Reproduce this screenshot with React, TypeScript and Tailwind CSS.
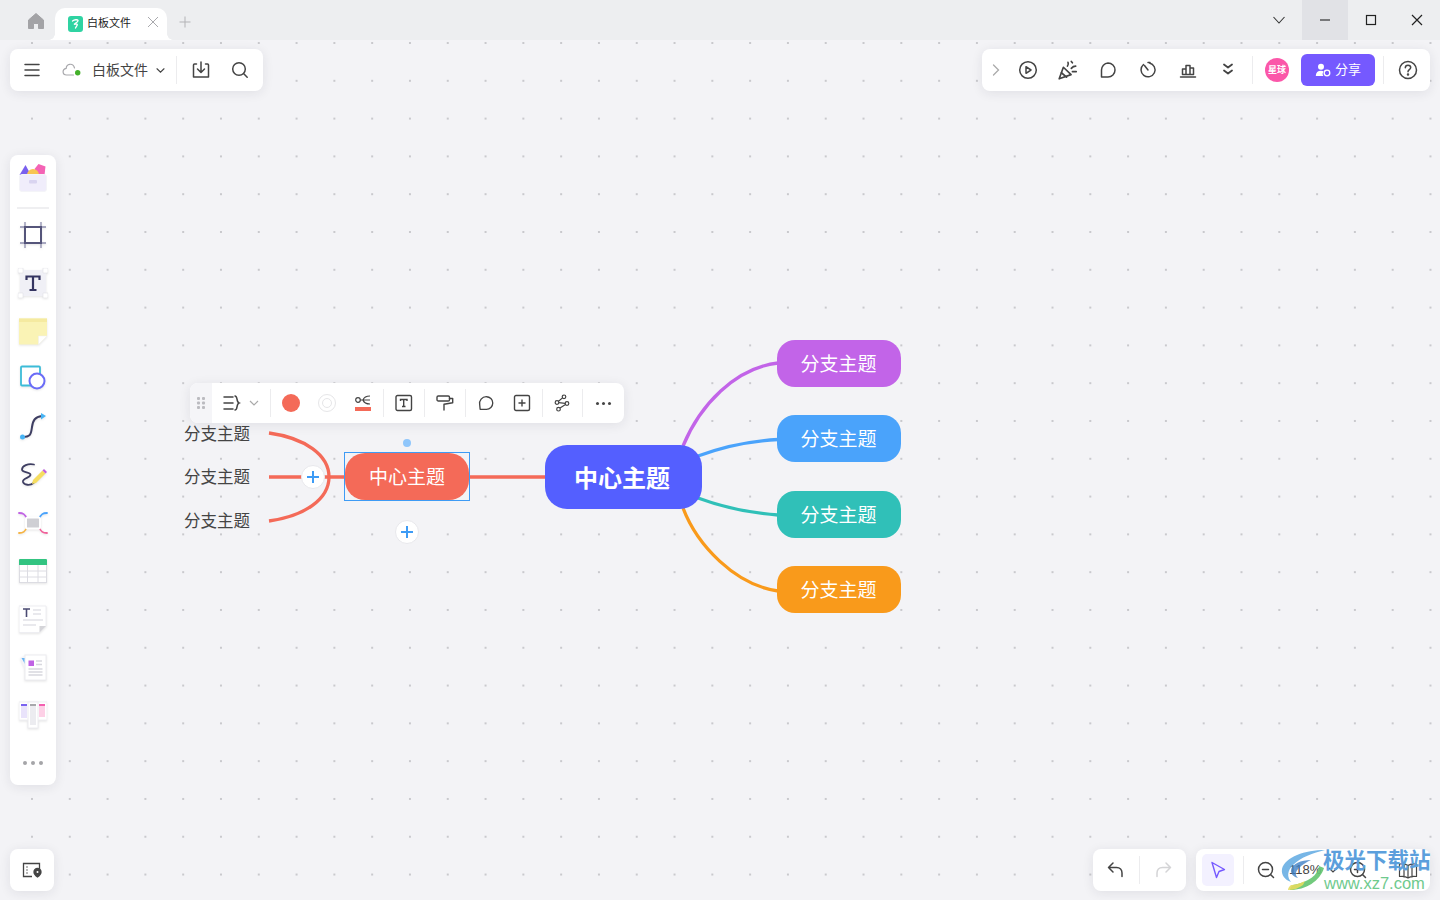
import { ReactNode } from "react";

const FONT = "font-['Noto_Sans_CJK_SC','Noto_Sans',sans-serif]";

const Line = ({ size = 20, children, color = "#444" }: { size?: number; children: ReactNode; color?: string }) => (
  <svg width={size} height={size} viewBox="0 0 20 20" fill="none" stroke={color} strokeWidth="1.5" strokeLinecap="round" strokeLinejoin="round">
    {children}
  </svg>
);

const Sep = ({ h = "h-[28px]", className = "" }: { h?: string; className?: string }) => (
  <div className={`w-px shrink-0 bg-[#ececee] ${h} ${className}`} />
);

const panel = "rounded-[8px] bg-white shadow-[0_2px_12px_rgba(30,30,60,0.09)]";

const TitleBar = () => (
  <div className="flex h-[40px] w-full items-end bg-[#edeef0]">
    <div className="ml-[17px] flex h-[42px] w-[37px] items-center justify-center self-start">
      <svg width="18" height="18" viewBox="0 0 18 18" fill="#a3a3a6">
        <path d="M9 1.500 1.500 8v8.500h5v-5h5v5h5V8z" strokeLinejoin="round" stroke="#a3a3a6" />
      </svg>
    </div>
    <div className="relative ml-[1px] flex h-[32px] w-[112px] items-center rounded-t-[10px] bg-white pl-[13px]">
      <div className="absolute bottom-0 left-[-6px] h-[6px] w-[6px] bg-[radial-gradient(circle_at_0_0,transparent_5.5px,white_6px)]" />
      <div className="absolute bottom-0 right-[-6px] h-[6px] w-[6px] bg-[radial-gradient(circle_at_100%_0,transparent_5.5px,white_6px)]" />
      <svg width="15" height="16" viewBox="0 0 15 16">
        <rect width="15" height="16" rx="3" fill="#2fd3a2" />
        <path d="M4.500 5c2-1.500 5-1.600 5.500-.6.4 1-2.600 2.800-4 4.100 1.500-.6 3.500-.6 3.300.4-.2 1-1.300 2.100-1.800 3.200" fill="none" stroke="#fff" strokeWidth="1.300" strokeLinecap="round" />
      </svg>
      <span className={`mb-[3px] ml-[4px] text-[11px] text-[#222] ${FONT}`}>白板文件</span>
      <svg className="absolute left-[92px] top-[8px]" width="12" height="12" viewBox="0 0 12 12" stroke="#a9a9ad" strokeWidth="1">
        <path d="m1 1 10 10M11 1 1 11" />
      </svg>
    </div>
    <div className="ml-[11px] flex h-[44px] w-[14px] items-center justify-center self-start">
      <svg width="12" height="12" viewBox="0 0 12 12" stroke="#b3b3b6" strokeWidth="1">
        <path d="M6 .5v11M.5 6h11" />
      </svg>
    </div>
    <div className="ml-auto flex h-[40px]">
      <div className="flex w-[46px] items-center justify-center">
        <svg width="14" height="14" viewBox="0 0 14 14" fill="none" stroke="#333" strokeWidth="1.100"><path d="m1.500 4 5.500 6 5.500-6" /></svg>
      </div>
      <div className="flex w-[46px] items-center justify-center bg-[#e1e2e6]">
        <svg width="12" height="12" viewBox="0 0 12 12" stroke="#222" strokeWidth="1.100"><path d="M1 6h10" /></svg>
      </div>
      <div className="flex w-[46px] items-center justify-center">
        <svg width="12" height="12" viewBox="0 0 12 12" fill="none" stroke="#222" strokeWidth="1.200"><rect x="1.500" y="1.500" width="9" height="9" /></svg>
      </div>
      <div className="flex w-[46px] items-center justify-center">
        <svg width="12" height="12" viewBox="0 0 12 12" stroke="#222" strokeWidth="1.200"><path d="m1 1 10 10M11 1 1 11" /></svg>
      </div>
    </div>
  </div>
);

const FilePanel = () => (
  <div className={`absolute left-[10px] top-[9px] flex h-[42px] w-[253px] items-center ${panel}`}>
    <div className="flex w-[44px] justify-center">
      <svg width="16" height="14" viewBox="0 0 16 14" stroke="#444" strokeWidth="1.500" strokeLinecap="round"><path d="M1 1.500h14M1 7h14M1 12.500h14" /></svg>
    </div>
    <div className="ml-[4px] flex w-[28px] justify-center">
      <svg width="20" height="14" viewBox="0 0 20 14" fill="none">
        <path d="M12.500 5C11.800 2.500 9.800 1 7.700 1.300 5.600 1.600 4.300 3.300 4.200 5.300 2.200 5.800 1 7.300 1.100 9c.1 1.800 1.500 3 3.400 3h7" stroke="#a8a8ac" strokeWidth="1.200" strokeLinecap="round" />
        <circle cx="15.700" cy="9.700" r="2.700" fill="#43b02a" />
      </svg>
    </div>
    <span className={`mb-[2px] ml-[6px] whitespace-nowrap text-[14px] text-[#444] ${FONT}`}>白板文件</span>
    <div className="ml-[6px] flex w-[12px] justify-center">
      <svg width="9" height="7" viewBox="0 0 10 8" fill="none" stroke="#444" strokeWidth="1.300" strokeLinecap="round"><path d="m1 2 4 4 4-4" /></svg>
    </div>
    <Sep className="ml-[10px]" />
    <div className="ml-[4px] flex w-[40px] justify-center">
      <Line>
        <path d="M5.500 4H3.500A1 1 0 0 0 2.500 5v12h15V5a1 1 0 0 0-1-1h-2" />
        <path d="M10 2v10M6.500 9l3.500 3.500L13.500 9" />
      </Line>
    </div>
    <div className="flex w-[38px] justify-center">
      <Line>
        <circle cx="9" cy="9" r="6.300" />
        <path d="m13.800 13.800 3.400 3.400" />
      </Line>
    </div>
  </div>
);

const ActionPanel = () => (
  <div className={`absolute left-[982px] top-[9px] flex h-[42px] w-[448px] items-center ${panel}`}>
    <div className="flex w-[28px] justify-center">
      <svg width="8" height="12" viewBox="0 0 8 12" fill="none" stroke="#aaa" strokeWidth="1.300" strokeLinecap="round"><path d="m1.500 1 5 5-5 5" /></svg>
    </div>
    <div className="ml-[-2px] flex w-[40px] justify-center">
      <Line>
        <circle cx="10" cy="10" r="8.300" />
        <path d="M8 6.700v6.600l5-3.300z" />
      </Line>
    </div>
    <div className="flex w-[40px] justify-center">
      <Line size={22}>
        <path d="M2 18 5.800 7.500l7 6.700z" />
        <path d="M4 12.500 8.700 16.500M9.500 6.500C10.500 5 10.500 4 10 3M13 8.500c1.300-1.500 2.500-2 4-2M14 11.500h3.500M13 2.200 14 3.500" />
      </Line>
    </div>
    <div className="flex w-[40px] justify-center">
      <Line>
        <path d="M10 3a7 7 0 0 1 0 14H3.500V10A7 7 0 0 1 10 3z" />
      </Line>
    </div>
    <div className="flex w-[40px] justify-center">
      <Line>
        <path d="M5.500 4.500a7 7 0 1 0 6-1.500M10 10 6.500 5.500M10 2.500h2" />
      </Line>
    </div>
    <div className="flex w-[40px] justify-center">
      <Line>
        <path d="M2.500 17h15M4.500 14.500V9h3.500v5.500zM8 14.500V5.500h4v9zM12 14.500V8h3.500v6.500z" />
      </Line>
    </div>
    <div className="flex w-[40px] justify-center">
      <Line>
        <path d="m6 4.500 4 3 4-3M6 10.500l4 3 4-3" strokeWidth="1.800" />
      </Line>
    </div>
    <Sep className="ml-[4px]" />
    <div className={`ml-[12px] flex h-[24px] w-[24px] items-center justify-center rounded-full bg-[#fb57a9] text-[9px] font-bold text-white ${FONT}`}>星球</div>
    <div className={`ml-[12px] flex h-[32px] w-[74px] items-center justify-center gap-[4px] rounded-[6px] bg-[#7559ff] text-[13px] text-white ${FONT}`}>
      <svg width="16" height="14" viewBox="0 0 16 14" fill="#fff">
        <circle cx="6" cy="3.700" r="3" />
        <path d="M.8 13c0-3.500 2-5.300 5.200-5.300 1 0 1.800.2 2.500.5A4.500 4.500 0 0 0 8.300 13z" />
        <circle cx="12" cy="10" r="2.800" fill="none" stroke="#fff" strokeWidth="1.300" />
      </svg>
      <span className="mb-[2px]">分享</span>
    </div>
    <Sep className="ml-[8px]" />
    <div className="ml-[4px] flex w-[40px] justify-center">
      <Line>
        <circle cx="10" cy="10" r="8.500" />
        <path d="M7.300 7.800C7.300 6.200 8.500 5.200 10 5.200s2.700 1 2.700 2.400c0 2-2.700 2.200-2.700 4.200" />
        <circle cx="10" cy="14.500" r=".5" fill="#444" />
      </Line>
    </div>
  </div>
);

const ToolIcons: ReactNode[] = [
  <svg key="frame" width="28" height="28" viewBox="0 0 28 28" fill="none">
    <path d="M6 1v26M22 1v26M1 6h26M1 22h26" stroke="#8f8fae" strokeWidth="1.300" />
    <rect x="6" y="6" width="16" height="16" fill="#fff" stroke="#55557a" strokeWidth="2" />
  </svg>,
  <svg key="text" width="30" height="30" viewBox="0 0 30 30">
    <rect x="2" y="2" width="26" height="26" fill="#f0f0f6" />
    <path d="M0 0h5v5H0zM25 0h5v5h-5zM0 25h5v5H0zM25 25h5v5h-5z" fill="#fff" stroke="#e0e0e6" strokeWidth="0.600" />
    <path d="M8.500 12V8.500h13V12M15 8.500v13.500M11.500 22h7" fill="none" stroke="#343461" strokeWidth="2.200" />
  </svg>,
  <svg key="note" width="28" height="28" viewBox="0 0 28 28">
    <path d="M0 1.500h28V19l-8.500 8.500H0z" fill="#faf3b5" />
    <path d="M0 1.500h28V5H0z" fill="#f5eaa0" />
    <path d="M28 19h-8.500v8.500z" fill="#fff" stroke="#eeeeee" strokeWidth="0.500" />
  </svg>,
  <svg key="shape" width="28" height="28" viewBox="0 0 28 28" fill="none">
    <rect x="2" y="1.500" width="19" height="19" fill="#fff" stroke="#3cbcd8" strokeWidth="1.800" rx="1" />
    <circle cx="18" cy="16" r="7.500" fill="#fff" stroke="#6a6cf7" strokeWidth="2" />
  </svg>,
  <svg key="conn" width="28" height="28" viewBox="0 0 28 28" fill="none">
    <path d="M3 24c9 0 9-3 10-10s3-10 10-11" stroke="#3e3e62" strokeWidth="2" />
    <circle cx="3.500" cy="24" r="2.500" fill="#47b4f5" />
    <path d="M22 0l5 3-5 3.500z" fill="#47b4f5" />
  </svg>,
  <svg key="pen" width="28" height="28" viewBox="0 0 28 28" fill="none">
    <path d="M15 3.500C9 2 3 5 3 8.500S12 11 11.500 14 3 17 4 21c1 3 7 4 10.500 1" stroke="#3e3e62" strokeWidth="1.800" strokeLinecap="round" />
    <path d="m13 23 1-4L23.500 9.500l3 3L17 22z" fill="#f6dd60" />
    <path d="m23.500 9.500 1.500-1.500 3 3-1.500 1.500z" fill="#c05ee0" />
  </svg>,
  <svg key="mind" width="30" height="22" viewBox="0 0 30 22" fill="none" strokeWidth="1.800" strokeLinecap="round">
    <path d="M1 1c4 0 6 1 8 6" stroke="#c063e4" />
    <path d="M29 1c-4 0-6 1-8 6" stroke="#4aa3fb" />
    <path d="M1 21c4 0 6-1 8-6" stroke="#f5b445" />
    <path d="M29 21c-4 0-6-1-8-6" stroke="#f0619a" />
    <rect x="8" y="5.500" width="14" height="11" rx="1.500" fill="#cfcfd4" stroke="#fff" strokeWidth="2" />
  </svg>,
  <svg key="table" width="28" height="24" viewBox="0 0 28 24" fill="none">
    <rect y="0" width="28" height="24" rx="1" fill="#fff" />
    <path d="M0 1a1 1 0 0 1 1-1h26a1 1 0 0 1 1 1v5H0z" fill="#33c481" />
    <path d="M0 12h28M0 18h28M8.500 6v18M19 6v18M.5 6v18M27.500 6v18M0 23.500h28" stroke="#dcdce2" />
  </svg>,
  <svg key="doc" width="28" height="28" viewBox="0 0 28 28" fill="none">
    <path d="M0 1h27v20l-6.500 6.500H0z" fill="#fff" stroke="#eeeef2" />
    <path d="M27 21h-6.500v6.500z" fill="#d4d4d8" />
    <path d="M4 4h7M7.500 4v8" stroke="#4a4a72" strokeWidth="1.600" />
    <path d="M14 5h8M14 9h8M4 15h20M4 20h13" stroke="#e2e2e8" strokeWidth="1.600" />
  </svg>,
  <svg key="cards" width="28" height="30" viewBox="0 0 28 30" fill="none">
    <path d="M1 6 7 3l3 24z" fill="#f4f4f7" />
    <path d="M2.500 6H6v6z" fill="#69b4f5" />
    <rect x="6" y="3" width="21" height="25" fill="#fff" stroke="#ececf0" />
    <rect x="9.500" y="8.500" width="5.500" height="5.500" fill="#c063e4" />
    <path d="M17 9h6M17 12.500h6M9.500 17h14M9.500 20h14M9.500 23h14" stroke="#d8d8de" strokeWidth="1.400" />
  </svg>,
  <svg key="kanban" width="28" height="28" viewBox="0 0 28 28" fill="none">
    <rect y="1" width="28" height="18" fill="#fff" stroke="#f0f0f3" />
    <rect x="2" y="3" width="6" height="14" fill="#e9e3fb" />
    <rect x="2" y="3" width="6" height="2" fill="#7a63f0" />
    <rect x="20" y="3" width="6" height="13" fill="#fdd0e6" />
    <rect x="20" y="3" width="6" height="2" fill="#f35fb0" />
    <rect x="9" y="1" width="10" height="26" fill="#fff" stroke="#ececf0" />
    <rect x="11" y="3" width="6" height="21" fill="#ececf0" />
    <rect x="11" y="3" width="6" height="2" fill="#a8a8ac" />
  </svg>,
];

const ToolPanel = () => (
  <div className={`absolute left-[10px] top-[115px] flex h-[630px] w-[46px] flex-col items-center ${panel}`}>
    <div className="flex h-[46px] shrink-0 items-center justify-center">
      <svg width="30" height="30" viewBox="0 0 30 30" fill="none">
        <path d="M1.500 12 7.500 2 13 12z" fill="#7a60ee" />
        <path d="M20.500 1l7 2.500-1 8.500h-7l-3-6z" fill="#f463b5" />
        <circle cx="15" cy="12" r="6" fill="#f8c553" />
        <rect x="1.500" y="11.500" width="27" height="17" rx="2.500" fill="#f0edfb" stroke="#f4f4f8" />
        <rect x="11" y="17" width="8" height="3.500" rx="1" fill="#d9d4f0" />
      </svg>
    </div>
    <div className="mt-[6px] h-[2px] w-[32px] shrink-0 bg-[#efeff1]" />
    <div className="mt-[2px] flex flex-col items-center">
      {ToolIcons.map((icon, i) => (
        <div key={i} className="flex h-[48px] w-[46px] shrink-0 items-center justify-center drop-shadow-[0_1px_1px_rgba(0,0,0,0.10)]">
          {icon}
        </div>
      ))}
      <div className="flex h-[46px] shrink-0 items-center justify-center gap-[4px] pt-[2px]">
        <div className="h-[4px] w-[4px] rounded-full bg-[#a5a5a8]" />
        <div className="h-[4px] w-[4px] rounded-full bg-[#a5a5a8]" />
        <div className="h-[4px] w-[4px] rounded-full bg-[#a5a5a8]" />
      </div>
    </div>
  </div>
);

const NodeToolbar = () => (
  <div className={`absolute left-[190px] top-[343px] z-20 flex h-[40px] w-[434px] items-center overflow-hidden ${panel}`}>
    <div className="flex h-full w-[22px] items-center justify-center bg-[#f5f5f8]">
      <svg width="10" height="14" viewBox="0 0 10 14" fill="#bbbbc0">
        <rect x="1" y="1" width="3" height="3" rx="1" />
        <rect x="6" y="1" width="3" height="3" rx="1" />
        <rect x="1" y="5.500" width="3" height="3" rx="1" />
        <rect x="6" y="5.500" width="3" height="3" rx="1" />
        <rect x="1" y="10" width="3" height="3" rx="1" />
        <rect x="6" y="10" width="3" height="3" rx="1" />
      </svg>
    </div>
    <svg className="ml-[11px]" width="18" height="18" viewBox="0 0 18 18" fill="none" stroke="#444" strokeWidth="1.500" strokeLinecap="round">
      <path d="M1 3h9M1 9h9M1 15h9M12 2c3 0 1 6 4 7-3 1-1 7-4 7" />
    </svg>
    <svg className="ml-[8px]" width="10" height="7" viewBox="0 0 10 7" fill="none" stroke="#aaa" strokeWidth="1.200"><path d="m1 1 4 4 4-4" /></svg>
    <Sep className="ml-[11px]" />
    <div className="ml-[11px] h-[18px] w-[18px] rounded-full bg-[#f46a58]" />
    <div className="ml-[18px] flex h-[18px] w-[18px] items-center justify-center rounded-full border border-[#e6e6e8]">
      <div className="h-[10px] w-[10px] rounded-full border border-[#e6e6e8]" />
    </div>
    <div className="ml-[18px] flex w-[18px] flex-col items-center gap-[2px]">
      <svg width="16" height="10" viewBox="0 0 16 10" fill="none" stroke="#444" strokeWidth="1.200">
        <circle cx="3" cy="5" r="2.300" />
        <path d="M5.300 5H15M15 1c-4 0-6 1-7 4 1 3 3 4 7 4" />
      </svg>
      <div className="h-[4px] w-[16px] bg-[#f46a58]" />
    </div>
    <Sep className="ml-[11px]" />
    <div className="ml-[10px] flex w-[20px] justify-center">
      <svg width="18" height="18" viewBox="0 0 18 18" fill="none" stroke="#444" strokeWidth="1.400">
        <rect x="1" y="1.500" width="15.500" height="15" rx="1.500" />
        <path d="M5.500 7V5.500h6.500V7M8.700 5.500v7M7 12.500h3.500" />
      </svg>
    </div>
    <Sep className="ml-[10px]" />
    <div className="ml-[10px] flex w-[20px] justify-center">
      <svg width="18" height="18" viewBox="0 0 18 18" fill="none" stroke="#444" strokeWidth="1.400" strokeLinejoin="round">
        <rect x="1" y="2" width="12.500" height="5" rx="1.300" />
        <path d="M13.500 4.500h3.200v4.300L8 10.300V16" strokeLinecap="round" />
      </svg>
    </div>
    <Sep className="ml-[10px]" />
    <div className="ml-[10px] flex w-[20px] justify-center">
      <Line size={18}>
        <path d="M10.500 3a7 7 0 0 1 0 14H3.500l-.5-5A7.500 7.500 0 0 1 10.500 3z" />
      </Line>
    </div>
    <div className="ml-[16px] flex w-[20px] justify-center">
      <svg width="18" height="18" viewBox="0 0 18 18" fill="none" stroke="#444" strokeWidth="1.400">
        <rect x="1.500" y="1.500" width="15" height="15" rx="1.500" />
        <path d="M9 5.500v7M5.500 9h7" />
      </svg>
    </div>
    <Sep className="ml-[10px]" />
    <div className="ml-[9px] flex w-[20px] justify-center">
      <svg width="16" height="18" viewBox="0 0 16 18" fill="none" stroke="#444" strokeWidth="1.200">
        <circle cx="10" cy="2.800" r="1.800" />
        <circle cx="3" cy="8.500" r="1.800" />
        <circle cx="13" cy="9.500" r="1.800" />
        <circle cx="4.500" cy="15.200" r="1.800" />
        <path d="M8.500 3.900 4.500 7.300M4.800 8.700l6.400.6M11.500 10.600 6 14" />
      </svg>
    </div>
    <Sep className="ml-[10px]" />
    <div className="ml-[9px] flex w-[22px] justify-center gap-[3px]">
      <div className="h-[3px] w-[3px] rounded-full bg-[#444]" />
      <div className="h-[3px] w-[3px] rounded-full bg-[#444]" />
      <div className="h-[3px] w-[3px] rounded-full bg-[#444]" />
    </div>
  </div>
);

const branches = [
  { top: "top-[300px]", bg: "bg-[#c264e8]" },
  { top: "top-[375px]", bg: "bg-[#4aa3fb]" },
  { top: "top-[451px]", bg: "bg-[#30c0b8]" },
  { top: "top-[526px]", bg: "bg-[#f99a1b]" },
];

const PlusDot = ({ className }: { className: string }) => (
  <div className={`absolute z-10 flex h-[24px] w-[24px] items-center justify-center rounded-full border border-[#e8e8ec] bg-white ${className}`}>
    <svg width="14" height="14" viewBox="0 0 14 14" stroke="#3d9bf5" strokeWidth="2"><path d="M7 1v12M1 7h12" /></svg>
  </div>
);

const MindMap = () => (
  <>
    <svg className="absolute left-0 top-0" width="1440" height="860" viewBox="0 40 1440 860" fill="none" strokeWidth="3.300">
      <path d="M470 477h75M269 477h76" stroke="#f46a58" />
      <path d="M269 433c36 5 60 22 60 44s-24 39-60 44" stroke="#f46a58" />
      <path d="M683 446c17-41 52-78 95-83" stroke="#c264e8" />
      <path d="M698 456c27-10 52-15 80-16.500" stroke="#4aa3fb" />
      <path d="M698 498c27 10 52 15 80 17" stroke="#30c0b8" />
      <path d="M683 508c14 37 52 77 95 83" stroke="#f99a1b" />
    </svg>
    {["top-[381px]", "top-[424px]", "top-[468px]"].map(top => (
      <div key={top} className={`absolute left-[184px] ${top} h-[24px] text-[16.500px] leading-[24px] text-[#444] ${FONT}`}>分支主题</div>
    ))}
    <div className="absolute left-[344px] top-[412px] flex h-[49px] w-[126px] items-center justify-center border border-[#3d9bf5]">
      <div className={`flex h-[47px] w-[124px] items-center justify-center rounded-[20px] bg-[#f46a58] text-[19px] text-white ${FONT}`}>中心主题</div>
    </div>
    <div className="absolute left-[403px] top-[399px] h-[8px] w-[8px] rounded-full bg-[#8fc6fb]" />
    <PlusDot className="left-[301px] top-[425px]" />
    <PlusDot className="left-[395px] top-[480px]" />
    <div className={`absolute left-[545px] top-[405px] flex h-[64px] w-[157px] items-center justify-center rounded-[22px] bg-[#545fff] pr-[3px] text-[24px] font-bold text-white ${FONT}`}>中心主题</div>
    {branches.map(b => (
      <div key={b.top} className={`absolute left-[777px] ${b.top} flex h-[47px] w-[124px] items-center justify-center rounded-[18px] ${b.bg} pr-[1px] text-[19px] text-white ${FONT}`}>分支主题</div>
    ))}
  </>
);

const BottomBars = () => (
  <>
    <div className={`absolute left-[10px] top-[809px] flex h-[42px] w-[44px] items-center justify-center ${panel}`}>
      <svg width="20" height="16" viewBox="0 0 20 16" fill="none" stroke="#444" strokeWidth="1.300">
        <path d="M10 14.500H1.500v-13h16V7" />
        <path d="M4.500 5h1M4.500 8h1M4.500 11h1" />
        <path d="M15.500 15s3.500-2.500 3.500-5a3.500 3.500 0 0 0-7 0c0 2.500 3.500 5 3.500 5z" fill="#444" />
        <circle cx="15.500" cy="10" r="1" fill="#fff" stroke="none" />
      </svg>
    </div>
    <div className="absolute bottom-[9px] right-[10px] flex gap-[10px]">
      <div className={`flex h-[42px] w-[93px] items-center ${panel}`}>
        <div className="flex w-[46px] justify-center">
          <Line>
            <path d="M7 3 2.500 7.500 7 12M2.500 7.500h8c3.500 0 5.500 2.500 5.500 5.500v3.500" />
          </Line>
        </div>
        <Sep />
        <div className="flex w-[46px] justify-center">
          <Line color="#d4d4d6">
            <path d="M13 3l4.500 4.500L13 12M17.500 7.500h-8C6 7.500 4 10 4 13v3.500" />
          </Line>
        </div>
      </div>
      <div className={`flex h-[42px] w-[234px] items-center ${panel}`}>
        <div className="ml-[6px] flex h-[32px] w-[32px] items-center justify-center rounded-[5px] bg-[#f3f1ff]">
          <svg width="16" height="18" viewBox="0 0 16 18" fill="none" stroke="#7559ff" strokeWidth="1.400" strokeLinejoin="round">
            <path d="M2 1.500 14.500 8.500 9 10.500 6.500 16.500z" />
          </svg>
        </div>
        <Sep className="ml-[9px]" />
        <div className="ml-[11px] flex w-[22px] justify-center">
          <Line>
            <circle cx="9.500" cy="9.500" r="7" />
            <path d="M6.500 9.500h6M14.500 14.500l3 3" />
          </Line>
        </div>
        <span className="ml-[12px] w-[32px] font-['Liberation_Sans',sans-serif] text-[13px] text-[#444]">118%</span>
        <div className="ml-[6px] flex w-[12px] justify-center">
          <svg width="10" height="7" viewBox="0 0 10 7" fill="none" stroke="#444" strokeWidth="1.200"><path d="m1 1 4 4 4-4" /></svg>
        </div>
        <div className="ml-[8px] flex w-[22px] justify-center">
          <Line>
            <circle cx="9.500" cy="9.500" r="7" />
            <path d="M6.500 9.500h6M9.500 6.500v6M14.500 14.500l3 3" />
          </Line>
        </div>
        <div className="ml-[28px] flex w-[22px] justify-center">
          <Line>
            <path d="M10 5.500C8 3.800 5 3.500 1.500 4v12.500c3.500-.5 6.500-.2 8.500 1.500 2-1.700 5-2 8.500-1.500V4c-3.500-.5-6.500-.2-8.500 1.500zM10 5.500V18M6 4v13M14 4v13" strokeWidth="1.200" />
          </Line>
        </div>
      </div>
    </div>
  </>
);

const Watermark = () => (
  <div className="pointer-events-none absolute left-[1281px] top-[809px] z-30 h-[42px] w-[152px]">
    <svg className="absolute left-0 top-0" width="46" height="42" viewBox="0 0 46 42">
      <path d="M44 1C24 1 4 8 1 20c-1 6 3 11 9 13C6 28 6 22 12 16 20 8 32 4 44 1z" fill="#5fa9e2" fillOpacity="0.850" />
      <path d="M30 11C20 11 11 15 10 21c-.5 4 3 7 7 8-3-3-3-6 1-10 3-3 7-6 12-8z" fill="#3f7fc4" fillOpacity="0.800" />
      <path d="M38 17c-1 9-10 16-26 19-2 2-3 3-3 5 16 0 30-9 34-22z" fill="#63c46f" fillOpacity="0.900" />
      <path d="M24 32c-6 3-11 4-14 4-2 2-3 3-3 5 6 0 11-2 15-5z" fill="#e6dc5e" fillOpacity="0.900" />
    </svg>
    <span className={`absolute left-[42px] top-[-6px] whitespace-nowrap text-[21.500px] font-bold leading-[32px] text-[#5c9fdc] ${FONT}`}>极光下载站</span>
    <span className="absolute left-[43px] top-[24px] whitespace-nowrap font-['Liberation_Sans',sans-serif] text-[16.500px] leading-[20px] text-[#6fca8e]">www.xz7.com</span>
  </div>
);

const App = () => (
  <div className="flex h-[900px] w-[1440px] flex-col overflow-hidden">
    <TitleBar />
    <div className="relative h-[860px] w-full bg-[#f3f3f6] bg-[radial-gradient(circle,#c9c9cd_1px,transparent_1.500px)] bg-[size:37.800px_37.800px] bg-[position:13.100px_-15.900px]">
      <MindMap />
      <FilePanel />
      <ActionPanel />
      <ToolPanel />
      <NodeToolbar />
      <BottomBars />
      <Watermark />
    </div>
  </div>
);

export default App;
